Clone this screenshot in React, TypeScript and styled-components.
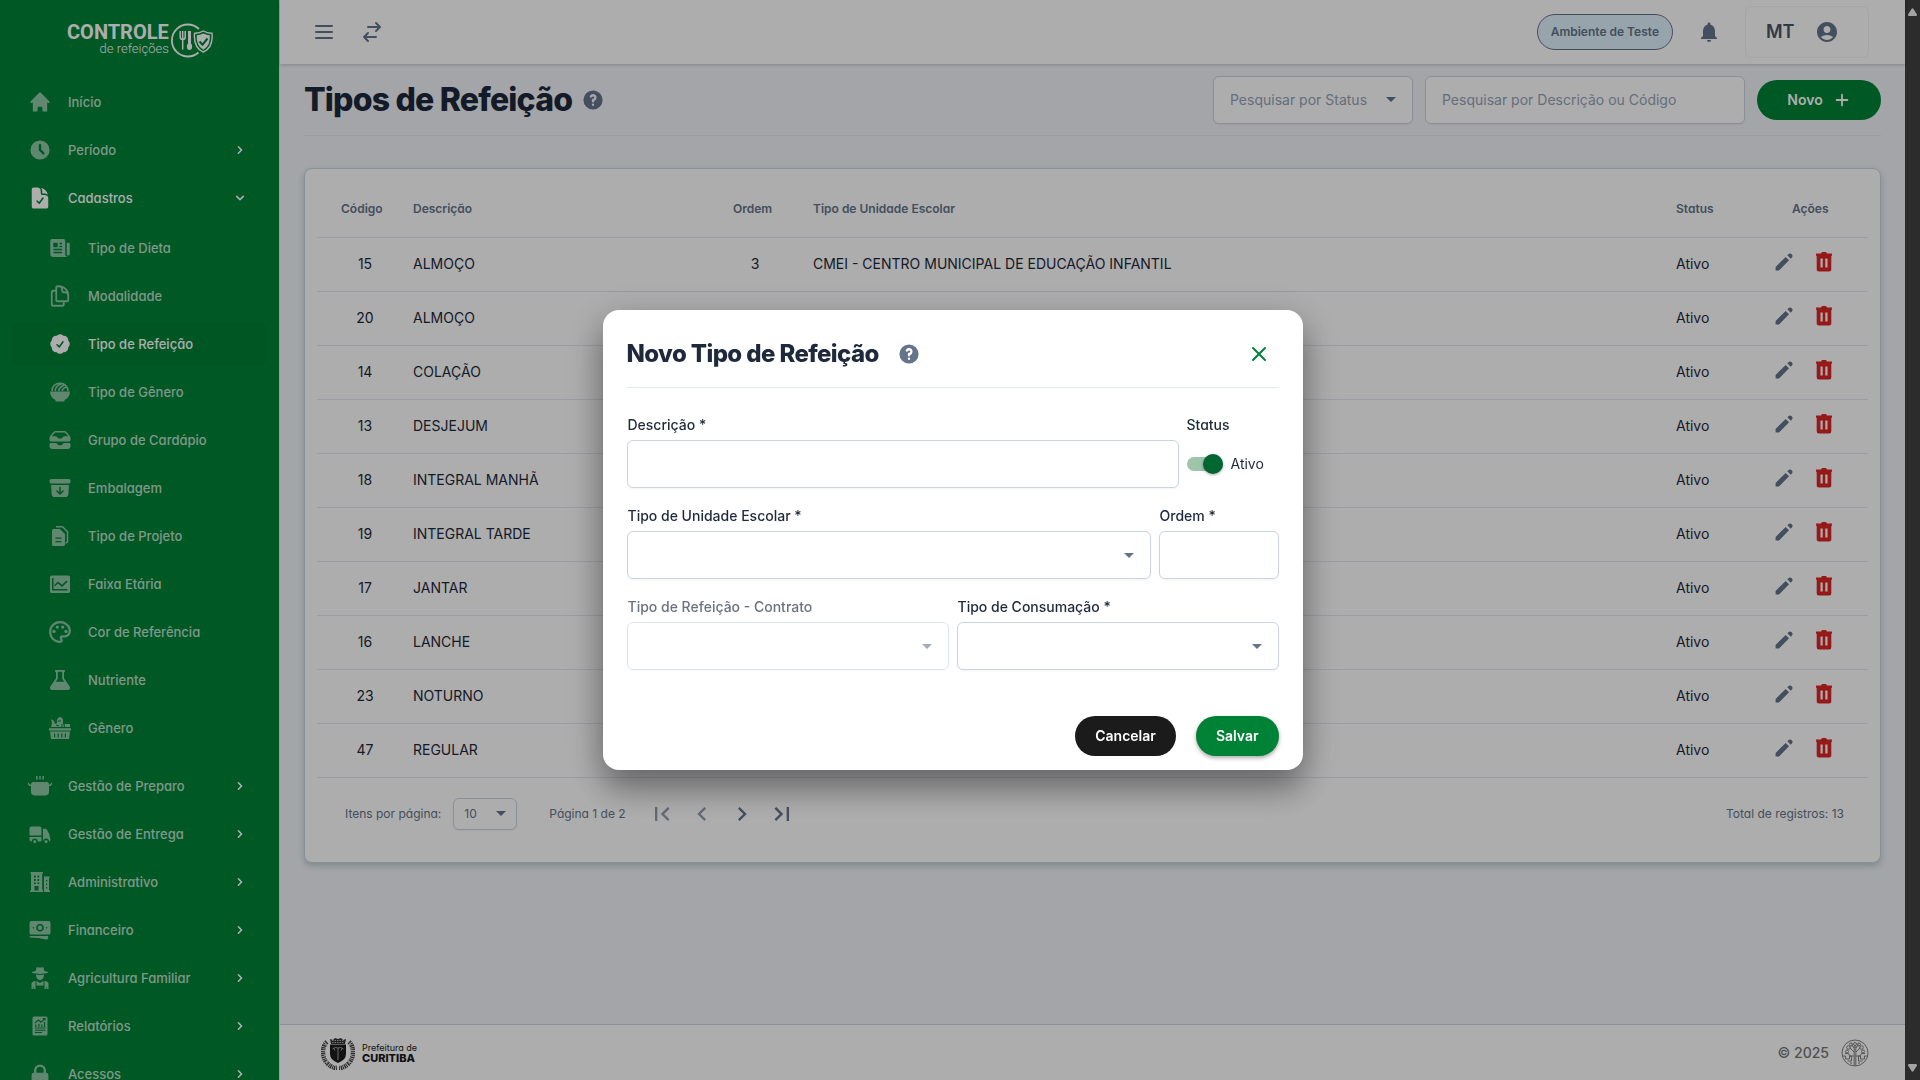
import React from 'react';
import styled, { createGlobalStyle, css } from 'styled-components';
import {
  HiHome,
  HiClock,
  HiChevronRight,
  HiChevronDown,
  HiLockClosed,
  HiOutlineMenu,
  HiOutlineSwitchHorizontal,
  HiOutlineX,
  HiPencil,
  HiPlus,
  HiQuestionMarkCircle,
} from 'react-icons/hi';
import {
  HiDocumentCheck,
  HiNewspaper,
  HiOutlineDocumentDuplicate,
  HiCheckBadge,
  HiInboxStack,
  HiArchiveBoxArrowDown,
  HiTruck,
  HiBanknotes,
} from 'react-icons/hi2';
import {
  MdNotifications,
  MdAccountCircle,
  MdOutlinePalette,
  MdFirstPage,
  MdLastPage,
  MdChevronLeft,
  MdChevronRight,
} from 'react-icons/md';

const color = {
  green: '#008236',
  slate50: '#f1f4f9',
  line: '#e2e8f0',
  border: '#cbd5e1',
  muted: '#94a3b8',
  text: '#1e293b',
  secondary: '#64748b',
};

const GlobalStyle = createGlobalStyle`
  *, *::before, *::after { box-sizing: border-box; }
  body {
    margin: 0;
    font-family: Inter, Roboto, sans-serif;
    font-size: 14px;
    line-height: 20px;
    color: ${color.text};
    font-feature-settings: 'cv11';
  }
  button, input, select { font: inherit; color: inherit; margin: 0; }
  h1, h2, p, ul { margin: 0; padding: 0; }
`;

/* ---------- shell ---------- */

const Shell = styled.div`
  display: flex;
  height: 100vh;
  overflow: hidden;
`;

const Main = styled.div`
  flex: 1;
  min-width: 0;
  display: flex;
  flex-direction: column;
  background: ${color.slate50};
`;

const ScrollRail = styled.div`
  flex: none;
  width: 15px;
  background: #2c2c2c;
  display: flex;
  flex-direction: column;
  align-items: center;
  justify-content: space-between;
  padding: 8px 0;
`;

/* ---------- sidebar ---------- */

const Sidebar = styled.aside`
  flex: none;
  width: 280px;
  background: ${color.green};
  border-right: 1px solid ${color.line};
  overflow: hidden;
`;

const Brand = styled.div`
  display: flex;
  height: 80px;
  padding: 22px 0 0 67px;
  gap: 2px;
  color: #fff;
  font-family: Roboto, sans-serif;
`;

const BrandText = styled.div`
  display: flex;
  flex-direction: column;
  align-items: flex-end;
`;

const BrandName = styled.span`
  font-size: 20px;
  line-height: 20px;
  font-weight: 700;
`;

const BrandSub = styled.span`
  font-size: 13px;
  line-height: 13px;
  font-weight: 300;
`;

const NavList = styled.ul`
  list-style: none;
  display: flex;
  flex-direction: column;
  gap: 4px;
`;

const SubList = styled(NavList)`
  padding: 6px 0 10px;
`;

const NavLink = styled.a<{ $child?: boolean; $on?: boolean; $current?: boolean }>`
  display: flex;
  align-items: center;
  gap: 16px;
  height: 44px;
  margin: 0 12px;
  padding: 0 16px 0 ${(p) => (p.$child ? 36 : 16)}px;
  border-radius: 6px;
  font-size: 13px;
  font-weight: 500;
  text-decoration: none;
  color: ${(p) => (p.$on ? '#fff' : 'rgba(255, 255, 255, 0.75)')};
  background: ${(p) => (p.$current ? 'rgba(0, 0, 0, 0.02)' : 'transparent')};
  > svg:first-child {
    flex: none;
    opacity: ${(p) => (p.$on ? 1 : 0.75)};
  }
`;

const NavLabel = styled.span`
  flex: 1;
`;

const NavArrow = styled.span`
  display: flex;
  justify-content: center;
  width: 22px;
  color: #fff;
`;

/* ---------- top bar ---------- */

const TopBar = styled.header`
  flex: none;
  display: flex;
  align-items: center;
  height: 64px;
  padding: 0 36px 0 24px;
  background: #fff;
  color: ${color.secondary};
  box-shadow: 0 1px 3px rgba(0, 0, 0, 0.2);
  z-index: 1;
`;

const IconButton = styled.button<{ $size?: number; $faded?: boolean }>`
  display: inline-flex;
  align-items: center;
  justify-content: center;
  width: ${(p) => p.$size ?? 40}px;
  height: ${(p) => p.$size ?? 40}px;
  padding: 0;
  border: 0;
  background: none;
  color: ${color.secondary};
  opacity: ${(p) => (p.$faded ? 0.7 : 1)};
`;

const TopLeft = styled.div`
  display: flex;
  gap: 8px;
`;

const TopRight = styled.div`
  display: flex;
  align-items: center;
  gap: 16px;
  margin-left: auto;
`;

const EnvBadge = styled.span`
  display: inline-flex;
  align-items: center;
  height: 36px;
  padding: 0 13px;
  border: 1px solid ${color.secondary};
  border-radius: 18px;
  background: #e0f2fe;
  font-size: 12px;
  font-weight: 600;
`;

const Account = styled.button`
  display: flex;
  align-items: center;
  gap: 20px;
  width: 124px;
  height: 52px;
  padding: 0 20px;
  border: 1px solid #f1f5f9;
  border-radius: 6px;
  background: none;
  font-size: 18px;
  font-weight: 600;
  color: #475569;
  svg { color: ${color.secondary}; }
`;

/* ---------- page ---------- */

const Page = styled.main`
  flex: 1;
  padding: 0 24px;
`;

const PageHead = styled.div`
  display: flex;
  align-items: center;
  gap: 9px;
  height: 72px;
  border-bottom: 1px solid ${color.line};
`;

const Title = styled.h1`
  font-size: 32px;
  line-height: 40px;
  font-weight: 800;
  letter-spacing: -0.025em;
  font-feature-settings: normal;
`;

const HeadTools = styled.div`
  display: flex;
  align-items: center;
  gap: 12px;
  margin-left: auto;
  font-feature-settings: normal;
`;

const controlBox = css`
  width: 100%;
  height: 48px;
  padding: 0 16px;
  border: 1px solid ${color.border};
  border-radius: 6px;
  background: #fff;
  box-shadow: 0 1px 2px rgba(0, 0, 0, 0.05);
  font-size: 14px;
  font-feature-settings: normal;
`;

const TextInput = styled.input`
  ${controlBox}
  &::placeholder { color: ${color.muted}; opacity: 1; }
`;

const SelectWrap = styled.div<{ $off?: boolean; $small?: boolean }>`
  display: grid;
  align-items: center;
  color: ${color.secondary};
  opacity: ${(p) => (p.$off ? 0.6 : 1)};
  > * { grid-area: 1 / 1; }
  > svg {
    justify-self: end;
    margin-right: ${(p) => (p.$small ? 11 : 17)}px;
    pointer-events: none;
  }
`;

const Select = styled.select`
  ${controlBox}
  appearance: none;
  color: ${color.muted};
  opacity: 1;
`;

const SmallSelect = styled(Select)`
  width: 64px;
  height: 32px;
  padding: 0 10px;
  font-size: 12px;
  color: ${color.secondary};
`;

const Sized = styled.div<{ $w: number }>`
  width: ${(p) => p.$w}px;
`;

const Pill = styled.button<{ $tone?: 'dark' }>`
  display: inline-flex;
  align-items: center;
  justify-content: center;
  gap: 10px;
  height: 40px;
  padding: 0 20px;
  border: 0;
  border-radius: 20px;
  background: ${(p) => (p.$tone === 'dark' ? '#1b1b1b' : color.green)};
  color: #fff;
  font-size: 14px;
  font-weight: 600;
  font-feature-settings: normal;
`;

const NewButton = styled(Pill)`
  width: 124px;
`;

const SaveButton = styled(Pill)`
  box-shadow: 0 2px 4px rgba(0, 0, 0, 0.35);
`;

const Card = styled.section`
  margin-top: 32px;
  padding: 12px;
  border: 1px solid ${color.border};
  border-radius: 8px;
  background: #fff;
  box-shadow: 0 3px 6px rgba(71, 105, 105, 0.3);
`;

const Table = styled.table`
  width: 100%;
  border-collapse: collapse;
  table-layout: fixed;
`;

const pads = { code: '0 12px 0 24px', order: '0 24px 0 12px', actions: '0 0 0 28px', plain: '0 12px' };

const Th = styled.th<{ $w?: number; $pad?: keyof typeof pads }>`
  width: ${(p) => (p.$w ? `${p.$w}px` : 'auto')};
  height: 56px;
  padding: ${(p) => pads[p.$pad ?? 'plain']};
  border-bottom: 1px solid ${color.line};
  text-align: left;
  font-size: 12px;
  font-weight: 600;
  color: ${color.secondary};
`;

const Td = styled.td<{ $pad?: keyof typeof pads; $center?: boolean }>`
  height: 54px;
  padding: ${(p) => pads[p.$pad ?? 'plain']};
  border-bottom: 1px solid ${color.line};
  text-align: ${(p) => (p.$center ? 'center' : 'left')};
  white-space: nowrap;
`;

const ActionTd = styled.td`
  padding: 0 0 4px;
  border-bottom: 1px solid ${color.line};
`;

const Actions = styled.div`
  display: flex;
  align-items: center;
`;

const Paginator = styled.div`
  display: flex;
  align-items: center;
  height: 72px;
  padding: 0 24px 0 28px;
  font-size: 12px;
  color: ${color.secondary};
`;

const PageSize = styled.div`
  display: flex;
  align-items: center;
  gap: 12px;
  margin-right: 32px;
`;

const PageNav = styled.nav`
  display: flex;
  margin-left: 16px;
`;

const Total = styled.p`
  margin-left: auto;
`;

const Footer = styled.footer`
  flex: none;
  display: flex;
  align-items: center;
  justify-content: space-between;
  height: 56px;
  padding: 0 36px 0 41px;
  border-top: 1px solid ${color.border};
  background: #fff;
`;

const CityBrand = styled.div`
  display: flex;
  align-items: center;
  gap: 7px;
  color: #1a1a1a;
`;

const CityText = styled.div`
  display: flex;
  flex-direction: column;
  font-size: 9px;
  line-height: 10px;
  strong { font-size: 11px; font-weight: 800; }
`;

const Copyright = styled.div`
  display: flex;
  align-items: center;
  gap: 12px;
  font-weight: 500;
  color: #757575;
`;

/* ---------- dialog ---------- */

const Backdrop = styled.div`
  position: fixed;
  inset: 0 15px 0 0;
  display: flex;
  align-items: center;
  justify-content: center;
  background: rgba(0, 0, 0, 0.32);
  z-index: 10;
`;

const Dialog = styled.form`
  width: 700px;
  max-width: 90vw;
  padding: 24px 24px 14px;
  border-radius: 16px;
  background: #fff;
  box-shadow: 0 20px 30px rgba(0, 0, 0, 0.25), 0 10px 40px rgba(0, 0, 0, 0.25);
`;

const DialogHead = styled.div`
  display: flex;
  align-items: center;
  height: 54px;
  padding: 0 8px 13px 0;
  border-bottom: 1px solid ${color.line};
  gap: 18px;
`;

const DialogTitle = styled.h2`
  font-size: 24px;
  line-height: 32px;
  font-weight: 800;
  letter-spacing: -0.025em;
  font-feature-settings: normal;
`;

const CloseButton = styled(IconButton)`
  margin-left: auto;
  color: ${color.green};
`;

const Fields = styled.div`
  display: flex;
  flex-direction: column;
  gap: 18px;
  padding: 27px 0 46px;
`;

const FieldRow = styled.div<{ $cols: string }>`
  display: grid;
  grid-template-columns: ${(p) => p.$cols};
  gap: 8px;
`;

const Field = styled.div`
  display: flex;
  flex-direction: column;
  gap: 5px;
`;

const Label = styled.label<{ $off?: boolean; $alt?: boolean }>`
  padding-left: ${(p) => (p.$alt ? 0 : 1)}px;
  font-weight: 500;
  color: ${(p) => (p.$off ? '#6b7280' : color.text)};
  font-feature-settings: ${(p) => (p.$alt ? "'cv11'" : 'normal')};
`;

const SwitchRow = styled.label`
  display: flex;
  align-items: center;
  gap: 8px;
  height: 48px;
`;

const Switch = styled.input`
  appearance: none;
  display: flex;
  align-items: center;
  justify-content: flex-end;
  width: 36px;
  height: 14px;
  border-radius: 7px;
  background: #9fc3ab;
  &::before {
    content: '';
    width: 20px;
    height: 20px;
    flex: none;
    border-radius: 50%;
    background: #016630;
    box-shadow: 0 1px 3px rgba(0, 0, 0, 0.35);
  }
`;

const DialogActions = styled.div`
  display: flex;
  justify-content: flex-end;
  gap: 20px;
`;

/* ---------- drawings ---------- */

type IconProps = { size?: number };

const Glyph = ({ size = 24, children }: IconProps & { children: React.ReactNode }) => (
  <svg width={size} height={size} viewBox="0 0 24 24" fill="currentColor" aria-hidden="true">
    {children}
  </svg>
);

const Caret = () => (
  <svg width="10" height="5" viewBox="0 0 10 5" fill="currentColor" aria-hidden="true">
    <path d="M0 0h10L5 5z" />
  </svg>
);

const PaletteIcon = () => (
  <svg width="24" height="24" viewBox="1 1 22 22" aria-hidden="true">
    <MdOutlinePalette size={24} />
  </svg>
);

const BowlIcon = () => (
  <Glyph>
    <path d="M2 11.500h20c0 4-2.200 7-5.500 8.600V21.500h-9v-1.400C4.200 18.500 2 15.500 2 11.500z" />
    <path
      d="M4 11c0-4.500 3.600-7.800 8-7.800s8 3.300 8 7.800M7 11c.6-3.600 2.800-6 6.500-7.200M10.500 11c.7-2.800 2.400-4.800 5.800-6M14 11c.5-2 1.700-3.300 4.200-4"
      fill="none"
      stroke="currentColor"
      strokeWidth="1.500"
    />
  </Glyph>
);

const ProjectIcon = () => (
  <Glyph>
    <path d="M8 2.700h6.500l5 5v9.300a2 2 0 0 1-2 2" fill="none" stroke="currentColor" strokeWidth="1.500" />
    <path
      fillRule="evenodd"
      d="M5.500 5h6.300L17 10V20.500a1.500 1.500 0 0 1-1.500 1.500h-10A1.500 1.500 0 0 1 4 20.500v-14A1.500 1.500 0 0 1 5.500 5zM7.500 13.500v1.300h6v-1.300zm0 3.500v1.300h6V17z"
    />
  </Glyph>
);

const AgeChartIcon = () => (
  <Glyph>
    <path
      fillRule="evenodd"
      d="M3.500 3.500h17A1.500 1.500 0 0 1 22 5v14.500a1.500 1.500 0 0 1-1.500 1.500h-17A1.500 1.500 0 0 1 2 19.500V5a1.500 1.500 0 0 1 1.500-1.500zM4 6v12.500h15.500V17H5.500V6zm2.500 8.800L10 11.500l4 3.500 5.500-5.300-1-1.200-4.500 4.300-4-3.400-3.500 3.400z"
    />
  </Glyph>
);

const FlaskIcon = () => (
  <Glyph>
    <path
      fillRule="evenodd"
      d="M7 2h10v1.800h-1v6.400l5.700 8.300c1 1.700 0 3.500-2 3.500H4.300c-2 0-3-1.800-2-3.500L8 10.200V3.800H7zm2.800 1.800v7l-2 3h8.400l-2-3v-7z"
    />
  </Glyph>
);

const BasketIcon = () => (
  <Glyph>
    <path d="M1 12.200h22v2.400H1z" />
    <path
      fillRule="evenodd"
      d="M2 15.500h20l-1 7.500H3zM6 17.500v4h1.200v-4zm3.600 0v4h1.200v-4zm3.600 0v4h1.200v-4zm3.600 0v4H18v-4z"
    />
    <path d="M3 3l3 2 1 3 2-1V4c.500-2 2-3 3-3s3 1 3 3v3l1 4H3l1-4zM16.500 8H22v3h-5z" />
    <path d="M10 5h3M8 9l3 1M14 8v3" stroke={color.green} strokeWidth="1" />
  </Glyph>
);

const PotIcon = () => (
  <Glyph>
    <path d="M3 10.500C3 8.500 4.500 8 6 8h12c1.500 0 3 .5 3 2.500V18c0 2-1.500 3.500-3.500 3.500h-11C4.500 21.500 3 20 3 18z" />
    <path
      d="M8.800 2v3.500M12 2v3.500M15.200 2v3.500M0 9l1.500 2.300H3M24 9l-1.500 2.300H21"
      fill="none"
      stroke="currentColor"
      strokeWidth="1.500"
    />
  </Glyph>
);

const BuildingIcon = () => (
  <Glyph>
    <path
      fillRule="evenodd"
      d="M2.500 2H15v1.500h-.8V20H15V22H2v-1.500h1V3.500h-.5zM6 5.500v2h1.700v-2zm3.500 0v2h1.700v-2zM6 9v2h1.700V9zm3.500 0v2h1.700V9zM6.500 16v4.500h4V16zM6 12.500v1.500h1.700v-1.500zm3.500 0v1.500h1.700v-1.500zM16 6.500h5.500V8H21v12.500h1V22h-6zm2 3.500v1.500h1.200V10zm0 3.500V15h1.200v-1.500zm0 3.500v1.500h1.200V17z"
    />
  </Glyph>
);

const FarmerIcon = () => (
  <Glyph>
    <path d="M8.500 1.500c1-.8 1.800 0 3.500 0s2.500-.8 3.500 0L16.300 5l3.700 1v1l-8 1-8-1V6l3.700-1zM8 8.500l4 .5 4-.5c0 3-1.500 5.500-4 5.500S8 11.500 8 8.500z" />
    <path d="M3.500 23v-5c0-1.700 1.500-2.700 4-3v8H6v-3l-.7 3zM20.500 23v-5c0-1.700-1.500-2.700-4-3v8H18v-3l.7 3zM8.500 15l3.500 2 3.500-2v4.500h-7z" />
  </Glyph>
);

const ReportIcon = () => (
  <Glyph>
    <path
      fillRule="evenodd"
      d="M6 2.500h12A1.500 1.500 0 0 1 19.500 4v16a1.500 1.500 0 0 1-1.500 1.500H6A1.500 1.500 0 0 1 4.500 20V4A1.500 1.500 0 0 1 6 2.500zM7 14.500h10.500v-1H7zm0 2.300h10.500v-1H7zm0 2.200h7v-1H7z"
    />
    <path
      d="M7.800 13v-2.500M10.800 13V9.800M13.800 13v-2.500M16.500 13V8M7 9l3.500-3 2.500 2.200L17 4.500M14.800 4.500H17v2"
      fill="none"
      stroke={color.green}
      strokeWidth="1.200"
    />
  </Glyph>
);

const TrashIcon = () => (
  <svg width="24" height="24" viewBox="0 0 24 24" fill="#dc2626" aria-hidden="true">
    <path
      fillRule="evenodd"
      d="M10 2h4l1 1.500h5V5.700h-.700V19.500a2 2 0 0 1-2 2h-10.600a2 2 0 0 1-2-2V5.700H4V3.500h5zM8.500 8.500v9h2.200v-9zm4.800 0v9h2.200v-9z"
    />
  </svg>
);

const BrandMark = () => (
  <svg width="42" height="36" viewBox="0 0 42 36" fill="none" stroke="#fff" aria-hidden="true">
    <path d="M28 7A16 16 0 1 0 27.500 30.500" strokeWidth="1.800" />
    <path d="M9.200 9v6q0 2.500 2.500 2.500T14.200 15V9M11.700 9v18.500" strokeWidth="1.500" />
    <path d="M18.500 9v13" strokeWidth="3" />
    <ellipse cx="18.500" cy="24.500" rx="2.600" ry="3.500" fill="#fff" stroke="none" />
    <path
      d="M32.300 9q4.500 2.500 8.700 2.200 1.500 14-8.700 19-10.200-5-8.700-19 4.200.3 8.700-2.200z"
      fill={color.green}
      strokeWidth="1.400"
    />
    <path d="M32.300 11.500q3.500 1.700 6.500 1.700.8 10.500-6.500 14.600-7.300-4.100-6.500-14.600 3 0 6.500-1.700z" fill="#fff" stroke="none" />
    <path d="M28.500 19.500l3 3.200 5-6.200" stroke={color.green} strokeWidth="2" />
  </svg>
);

const CityCrest = () => (
  <svg width="34" height="34" viewBox="0 0 34 34" fill="none" aria-hidden="true">
    <path d="M9 3l3 1 2-2 3 1 3-1 2 2 3-1-1 5H10z" fill="#333" />
    <path d="M11 4.500h12M11 6.500h12" stroke="#ddd" strokeWidth=".7" strokeDasharray="1.500 1" />
    <path
      d="M6 6C0 11 1 23 7 28q4 4 9 4M28 6c6 5 5 17-1 22q-4 4-9 4"
      stroke="#444"
      strokeWidth="4.500"
      strokeDasharray="1.500 .8 1 .6"
    />
    <path
      d="M4 8l4 2M2.500 14l5 1M2.500 20l5-1M5 27l4-4M30 8l-4 2M31.500 14l-5 1M31.500 20l-5-1M29 27l-4-4"
      stroke="#fff"
      strokeWidth=".7"
    />
    <path d="M9 8.500h16V18q0 6-8 9-8-3-8-9z" fill="#1c1c1c" />
    <path d="M17 12v12M11.500 13q2.500-2.500 5.500-1 3-1.500 5.500 1M13 12.500l1 2M21 12.500l-1 2" stroke="#bbb" strokeWidth=".8" />
  </svg>
);

const TreeSeal = () => (
  <svg width="28" height="28" viewBox="0 0 28 28" fill="none" stroke="#757575" strokeWidth=".9" aria-hidden="true">
    <circle cx="14" cy="14" r="13" />
    <path d="M13.200 26.500V7M14.800 26.500V7" />
    <path d="M13 13L8.500 8.500M15 13l4.500-4.500M13 9l-2.500-3.500M15 9l2.500-3.500M13 17H9l-2-3M15 17h4l2-3" />
    <circle cx="14" cy="5" r="1.500" />
    <circle cx="10" cy="5.500" r="1.500" />
    <circle cx="18" cy="5.500" r="1.500" />
    <circle cx="7.500" cy="8.500" r="1.800" />
    <circle cx="20.500" cy="8.500" r="1.800" />
    <circle cx="6" cy="12.500" r="1.500" />
    <circle cx="22" cy="12.500" r="1.500" />
    <path d="M1.500 17h3v3h4v-3h2v5h-4M26.500 17h-3v3h-4v-3h-2v5h4M10 25v-2M18 25v-2M4 14.500h3M24 14.500h-3" />
  </svg>
);

/* ---------- data ---------- */

type NavItem = { label: string; icon: React.ReactNode; current?: boolean };

const registry: NavItem[] = [
  { label: 'Tipo de Dieta', icon: <HiNewspaper size={24} /> },
  { label: 'Modalidade', icon: <HiOutlineDocumentDuplicate size={24} strokeWidth={1.8} /> },
  { label: 'Tipo de Refeição', icon: <HiCheckBadge size={24} />, current: true },
  { label: 'Tipo de Gênero', icon: <BowlIcon /> },
  { label: 'Grupo de Cardápio', icon: <HiInboxStack size={24} /> },
  { label: 'Embalagem', icon: <HiArchiveBoxArrowDown size={24} /> },
  { label: 'Tipo de Projeto', icon: <ProjectIcon /> },
  { label: 'Faixa Etária', icon: <AgeChartIcon /> },
  { label: 'Cor de Referência', icon: <PaletteIcon /> },
  { label: 'Nutriente', icon: <FlaskIcon /> },
  { label: 'Gênero', icon: <BasketIcon /> },
];

const modules: NavItem[] = [
  { label: 'Gestão de Preparo', icon: <PotIcon /> },
  { label: 'Gestão de Entrega', icon: <HiTruck size={24} /> },
  { label: 'Administrativo', icon: <BuildingIcon /> },
  { label: 'Financeiro', icon: <HiBanknotes size={24} /> },
  { label: 'Agricultura Familiar', icon: <FarmerIcon /> },
  { label: 'Relatórios', icon: <ReportIcon /> },
  { label: 'Acessos', icon: <HiLockClosed size={24} /> },
];

const meals = [
  { code: 15, name: 'ALMOÇO', order: '3', unit: 'CMEI - CENTRO MUNICIPAL DE EDUCAÇÃO INFANTIL' },
  { code: 20, name: 'ALMOÇO' },
  { code: 14, name: 'COLAÇÃO' },
  { code: 13, name: 'DESJEJUM' },
  { code: 18, name: 'INTEGRAL MANHÃ' },
  { code: 19, name: 'INTEGRAL TARDE' },
  { code: 17, name: 'JANTAR' },
  { code: 16, name: 'LANCHE' },
  { code: 23, name: 'NOTURNO' },
  { code: 47, name: 'REGULAR' },
];

/* ---------- parts ---------- */

const Group = ({ item, open, children }: { item: NavItem; open?: boolean; children?: React.ReactNode }) => (
  <li>
    <NavLink href="#" $on={open}>
      {item.icon}
      <NavLabel>{item.label}</NavLabel>
      <NavArrow>{open ? <HiChevronDown size={16} /> : <HiChevronRight size={16} />}</NavArrow>
    </NavLink>
    {children}
  </li>
);

const SideNav = () => (
  <Sidebar>
    <Brand>
      <BrandText>
        <BrandName>CONTROLE</BrandName>
        <BrandSub>de refeições</BrandSub>
      </BrandText>
      <BrandMark />
    </Brand>
    <nav>
      <NavList>
        <li>
          <NavLink href="#">
            <HiHome size={24} />
            <NavLabel>Início</NavLabel>
          </NavLink>
        </li>
        <Group item={{ label: 'Período', icon: <HiClock size={24} /> }} />
        <Group item={{ label: 'Cadastros', icon: <HiDocumentCheck size={24} /> }} open>
          <SubList>
            {registry.map((r) => (
              <li key={r.label}>
                <NavLink href="#" $child $on={r.current} $current={r.current}>
                  {r.icon}
                  <NavLabel>{r.label}</NavLabel>
                </NavLink>
              </li>
            ))}
          </SubList>
        </Group>
        {modules.map((m) => (
          <Group key={m.label} item={m} />
        ))}
      </NavList>
    </nav>
  </Sidebar>
);

const MealTable = () => (
  <Table>
    <thead>
      <tr>
        <Th $w={84} $pad="code">Código</Th>
        <Th $w={320}>Descrição</Th>
        <Th $w={80} $pad="order">Ordem</Th>
        <Th>Tipo de Unidade Escolar</Th>
        <Th $w={100}>Status</Th>
        <Th $w={104} $pad="actions">Ações</Th>
      </tr>
    </thead>
    <tbody>
      {meals.map((m) => (
        <tr key={m.code}>
          <Td $pad="code" $center>{m.code}</Td>
          <Td>{m.name}</Td>
          <Td $pad="order" $center>{m.order}</Td>
          <Td>{m.unit}</Td>
          <Td>Ativo</Td>
          <ActionTd>
            <Actions>
              <IconButton type="button" aria-label="Editar">
                <HiPencil size={24} />
              </IconButton>
              <IconButton type="button" aria-label="Excluir">
                <TrashIcon />
              </IconButton>
            </Actions>
          </ActionTd>
        </tr>
      ))}
    </tbody>
  </Table>
);

const NewMealDialog = () => (
  <Backdrop>
    <Dialog role="dialog" aria-labelledby="dialog-title">
      <DialogHead>
        <DialogTitle id="dialog-title">Novo Tipo de Refeição</DialogTitle>
        <IconButton type="button" $size={24} aria-label="Ajuda">
          <HiQuestionMarkCircle size={24} />
        </IconButton>
        <CloseButton type="button" $size={24} aria-label="Fechar">
          <HiOutlineX size={24} />
        </CloseButton>
      </DialogHead>
      <Fields>
        <FieldRow $cols="1fr 92px">
          <Field>
            <Label htmlFor="descricao">Descrição *</Label>
            <TextInput id="descricao" />
          </Field>
          <Field>
            <Label htmlFor="status" $alt>Status</Label>
            <SwitchRow>
              <Switch id="status" type="checkbox" role="switch" defaultChecked />
              Ativo
            </SwitchRow>
          </Field>
        </FieldRow>
        <FieldRow $cols="1fr 120px">
          <Field>
            <Label htmlFor="unidade">Tipo de Unidade Escolar *</Label>
            <SelectWrap>
              <Select id="unidade" />
              <Caret />
            </SelectWrap>
          </Field>
          <Field>
            <Label htmlFor="ordem">Ordem *</Label>
            <TextInput id="ordem" />
          </Field>
        </FieldRow>
        <FieldRow $cols="1fr 1fr">
          <Field>
            <Label htmlFor="contrato" $off>Tipo de Refeição - Contrato</Label>
            <SelectWrap $off>
              <Select id="contrato" disabled />
              <Caret />
            </SelectWrap>
          </Field>
          <Field>
            <Label htmlFor="consumacao">Tipo de Consumação *</Label>
            <SelectWrap>
              <Select id="consumacao" />
              <Caret />
            </SelectWrap>
          </Field>
        </FieldRow>
      </Fields>
      <DialogActions>
        <Pill type="button" $tone="dark">Cancelar</Pill>
        <SaveButton type="button">Salvar</SaveButton>
      </DialogActions>
    </Dialog>
  </Backdrop>
);

export default function App() {
  return (
    <>
      <GlobalStyle />
      <Shell>
        <SideNav />
        <Main>
          <TopBar>
            <TopLeft>
              <IconButton type="button" aria-label="Menu">
                <HiOutlineMenu size={24} />
              </IconButton>
              <IconButton type="button" aria-label="Alternar">
                <HiOutlineSwitchHorizontal size={24} />
              </IconButton>
            </TopLeft>
            <TopRight>
              <EnvBadge>Ambiente de Teste</EnvBadge>
              <IconButton type="button" aria-label="Notificações">
                <MdNotifications size={24} />
              </IconButton>
              <Account type="button">
                MT
                <MdAccountCircle size={24} />
              </Account>
            </TopRight>
          </TopBar>
          <Page>
            <PageHead>
              <Title>Tipos de Refeição</Title>
              <IconButton type="button" $size={24} aria-label="Ajuda">
                <HiQuestionMarkCircle size={24} />
              </IconButton>
              <HeadTools>
                <Sized $w={200}>
                  <SelectWrap>
                    <Select aria-label="Pesquisar por Status">
                      <option>Pesquisar por Status</option>
                    </Select>
                    <Caret />
                  </SelectWrap>
                </Sized>
                <Sized $w={320}>
                  <TextInput
                    aria-label="Pesquisar por Descrição ou Código"
                    placeholder="Pesquisar por Descrição ou Código"
                  />
                </Sized>
                <NewButton type="button">
                  Novo
                  <HiPlus size={18} />
                </NewButton>
              </HeadTools>
            </PageHead>
            <Card>
              <MealTable />
              <Paginator>
                <PageSize>
                  <label htmlFor="page-size">Itens por página:</label>
                  <SelectWrap $small>
                    <SmallSelect id="page-size">
                      <option>10</option>
                    </SmallSelect>
                    <Caret />
                  </SelectWrap>
                </PageSize>
                <span>Página 1 de 2</span>
                <PageNav aria-label="Paginação">
                  <IconButton type="button" $faded aria-label="Primeira página">
                    <MdFirstPage size={28} />
                  </IconButton>
                  <IconButton type="button" $faded aria-label="Página anterior">
                    <MdChevronLeft size={28} />
                  </IconButton>
                  <IconButton type="button" aria-label="Próxima página">
                    <MdChevronRight size={28} />
                  </IconButton>
                  <IconButton type="button" aria-label="Última página">
                    <MdLastPage size={28} />
                  </IconButton>
                </PageNav>
                <Total>Total de registros: 13</Total>
              </Paginator>
            </Card>
          </Page>
          <Footer>
            <CityBrand>
              <CityCrest />
              <CityText>
                Prefeitura de
                <strong>CURITIBA</strong>
              </CityText>
            </CityBrand>
            <Copyright>
              © 2025
              <TreeSeal />
            </Copyright>
          </Footer>
        </Main>
        <ScrollRail aria-hidden="true">
          <svg width="9" height="8" viewBox="0 0 9 8" fill="#a3a3a3">
            <path d="M3.500 1q1-1.500 2 0L9 6.500Q9 8 8 8H1Q0 8 0 6.500z" />
          </svg>
          <svg width="9" height="8" viewBox="0 0 9 8" fill="#a3a3a3">
            <path d="M3.500 7q1 1.500 2 0L9 1.500Q9 0 8 0H1Q0 0 0 1.500z" />
          </svg>
        </ScrollRail>
      </Shell>
      <NewMealDialog />
    </>
  );
}
